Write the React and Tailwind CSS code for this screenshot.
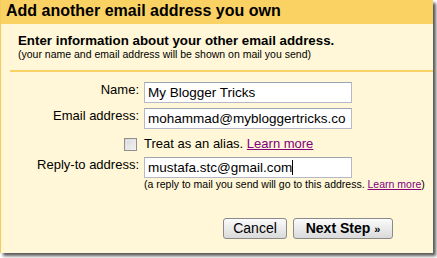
import React from "react";

function Field({ value, caret }) {
  return (
    <div className="w-[208px] h-[21px] bg-white border border-[#b5b8c8] border-t-[#9ea3b0] px-[3px] overflow-hidden whitespace-nowrap text-[13.5px] leading-[19px] text-black">
      {value}
      {caret && <span className="inline-block w-px h-[15px] bg-black align-[-3px]" />}
    </div>
  );
}

export default function App() {
  return (
    <div className="w-[437px] h-[258px] bg-white" style={{ fontFamily: '"Liberation Sans", Arial, sans-serif' }}>
      <div className="w-[433px] h-[253px] bg-[#fff7d7] border-l border-[#f5cd5f] shadow-[3px_3px_3px_rgba(0,0,0,0.65)] flex flex-col text-black">
        <div className="h-[24px] bg-[#fad163] pl-[5px] text-[16px] font-bold leading-[21px]">
          Add another email address you own
        </div>
        <div className="pl-[17px] pt-[10px]">
          <div className="text-[13.3px] font-bold leading-[14px]">Enter information about your other email address.</div>
          <div className="text-[10.5px] leading-[12px]">(your name and email address will be shown on mail you send)</div>
        </div>
        <div className="ml-[9px] mt-[10px] h-[2px] bg-[#fad163]" />
        <div className="mt-[10px] flex flex-col text-[13px] leading-[16px]">
          <div className="flex gap-x-[5px]">
            <div className="w-[138px] text-right">Name:</div>
            <Field value="My Blogger Tricks" />
          </div>
          <div className="flex gap-x-[5px] mt-[5px]">
            <div className="w-[138px] text-right">Email address:</div>
            <Field value="mohammad@mybloggertricks.co" />
          </div>
          <div className="flex gap-x-[5px] mt-[7px] items-start">
            <div className="w-[138px] flex justify-end pr-[2px] pt-[2px]">
              <div className="w-[13px] h-[13px] border border-[#8f8f8f] bg-gradient-to-br from-[#d4d4d4] to-[#f8f8f8] p-[1px]">
                <div className="w-full h-full border border-[#e8e8e8]" />
              </div>
            </div>
            <div className="text-[13px]">
              Treat as an alias. <span className="text-[#800080] underline">Learn more</span>
            </div>
          </div>
          <div className="flex gap-x-[5px] mt-[5px]">
            <div className="w-[138px] text-right">Reply-to address:</div>
            <Field value="mustafa.stc@gmail.com" caret />
          </div>
          <div className="pl-[143px] text-[10.5px] leading-[12px]">
            (a reply to mail you send will go to this address. <span className="text-[#800080] underline">Learn more</span>)
          </div>
        </div>
        <div className="mt-[28px] flex justify-end gap-[6px] pr-[40px]">
          <button className="w-[64px] h-[21px] border border-[#8a8a8a] rounded-[3px] bg-gradient-to-b from-[#fbfbfb] to-[#dadada] text-[14px] leading-[19px] text-black">
            Cancel
          </button>
          <button className="w-[100px] h-[21px] border border-[#8a8a8a] rounded-[3px] bg-gradient-to-b from-[#fbfbfb] to-[#dadada] text-[14px] font-bold leading-[19px] text-black">
            Next Step <span className="text-[11px]">»</span>
          </button>
        </div>
      </div>
    </div>
  );
}
